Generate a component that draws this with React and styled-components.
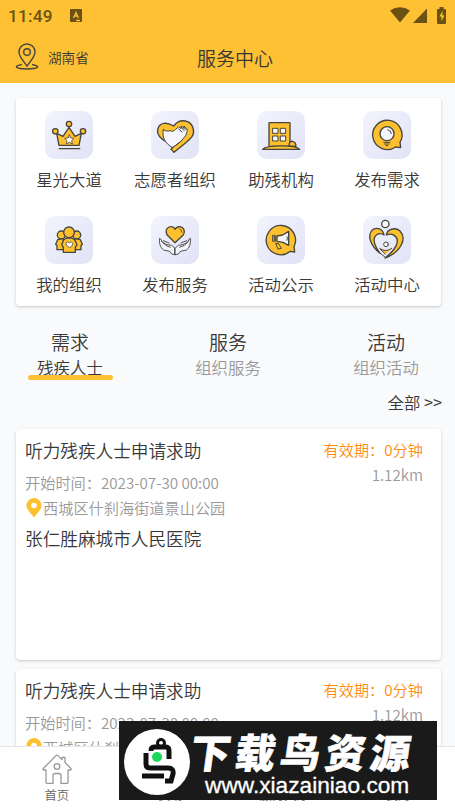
import React from 'react';
import styled, { createGlobalStyle } from 'styled-components';

const INK = '#47453f';
const GOLD = '#fdc02f';

const GlobalStyle = createGlobalStyle`
  * {
    box-sizing: border-box;
  }

  body {
    margin: 0;
    background: #f9fafc;
    font-family: 'Noto Sans CJK SC', sans-serif;
    font-weight: 350;
    color: #383838;
  }
`;

const Screen = styled.div`
  position: relative;
  width: 455px;
  height: 810px;
  display: flex;
  flex-direction: column;
  overflow: hidden;
  background: #f9fafc;
`;

const Header = styled.header`
  flex: none;
  height: 83px;
  background: #fdc133;
`;

const StatusBar = styled.div`
  height: 32px;
  padding: 0 8px;
  display: flex;
  align-items: center;
  color: #6b5114;
`;

const Time = styled.span`
  font-family: Roboto, sans-serif;
  font-size: 17.2px;
  font-weight: 500;
  letter-spacing: 0.2px;
  line-height: 32px;
`;

const StatusIcon = styled.svg`
  flex: none;
  margin-left: ${({ $gap }) => $gap};
  margin-top: -2px;
`;

const TitleBar = styled.div`
  height: 51px;
  display: grid;
  grid-template-columns: 1fr auto 1fr;
  align-items: center;
  padding: 0 14px 0 15px;
`;

const Region = styled.div`
  display: flex;
  align-items: center;
  gap: 9px;
  margin-top: -2px;
  font-size: 13.6px;
  line-height: 20px;
`;

const Title = styled.h1`
  margin: 0 0 0 14px;
  font-size: 19px;
  font-weight: 350;
  line-height: 28px;
`;

const Panel = styled.section`
  flex: none;
  margin: 0 14px 0 16px;
  background: #fff;
  border-radius: 4px;
  box-shadow: 0 1px 3px rgba(0, 0, 0, 0.2);
`;

const Menu = styled(Panel)`
  height: 208px;
  margin-top: 15px;
  padding-top: 13px;
  padding-right: 1px;
  display: grid;
  grid-template-columns: repeat(4, 1fr);
  grid-auto-rows: 105px;
`;

const MenuItem = styled.div`
  display: flex;
  flex-direction: column;
  align-items: center;
  gap: 8px;
  font-size: 16.4px;
  line-height: 24px;
  white-space: nowrap;
`;

const Tile = styled.div`
  width: 48px;
  height: 48px;
  border-radius: 10px;
  background: linear-gradient(135deg, #f2f4fe, #e1e2f5);

  svg {
    display: block;
    fill: ${GOLD};
    stroke: ${INK};
    stroke-width: 4;
    stroke-linejoin: round;
    stroke-linecap: round;
  }
`;

const Tabs = styled.div`
  flex: none;
  display: flex;
  justify-content: space-between;
  margin-top: 22px;
  padding: 0 27px 0 28px;
`;

const Tab = styled.div`
  width: 84px;
  display: flex;
  flex-direction: column;
  align-items: center;
  font-size: 19px;
  line-height: 28px;
`;

const TabNote = styled.span`
  margin-top: -1px;
  font-size: 16.4px;
  line-height: 24px;
  color: ${({ $active }) => ($active ? '#383838' : '#999')};
`;

const Underline = styled.div`
  width: 85px;
  height: 5px;
  margin-top: -4px;
  border-radius: 3px;
  background: #fdc133;
`;

const More = styled.div`
  flex: none;
  margin-top: 10px;
  padding-right: 13px;
  font-size: 16.4px;
  line-height: 24px;
  text-align: right;
`;

const Card = styled(Panel)`
  height: 231px;
  margin-top: ${({ $top }) => $top};
  padding: 8px 18px 0 9px;
  display: flex;
  justify-content: space-between;
`;

const Info = styled.div`
  display: flex;
  flex-direction: column;
`;

const CardTitle = styled.div`
  font-size: 17.65px;
  line-height: 28px;
`;

const Detail = styled.div`
  display: flex;
  align-items: center;
  margin-top: ${({ $top }) => $top || '0'};
  font-size: 15.2px;
  line-height: 25px;
  color: #999;
`;

const Content = styled.div`
  margin-top: 5px;
  font-size: 17.65px;
  line-height: 28px;
`;

const Side = styled.div`
  text-align: right;
  font-size: 15.2px;
  line-height: 25px;
  color: #999;
`;

const Expiry = styled.div`
  color: #ff8c0a;
`;

const NavBar = styled.nav`
  position: absolute;
  left: 0;
  right: 0;
  bottom: 0;
  height: 64px;
  display: grid;
  grid-template-columns: repeat(4, 1fr);
  background: #fff;
  border-top: 1px solid #e5e5e5;
`;

const NavItem = styled.div`
  display: flex;
  flex-direction: column;
  align-items: center;
  padding-top: 7px;
  font-size: 12.4px;
  line-height: 18px;
  color: #666;

  svg {
    margin-bottom: 2px;
  }
`;

const Banner = styled.div`
  position: absolute;
  left: 119px;
  top: 721px;
  width: 318px;
  height: 79px;
  padding-left: 5px;
  display: flex;
  align-items: center;
  background: #1a1a1a;
  color: #fff;
`;

const BannerLogo = styled.svg`
  flex: none;
  margin-top: 3px;
`;

const BannerText = styled.div`
  margin: 5px 0 0 1px;
`;

const BannerName = styled.div`
  width: 228px;
  font-size: 40px;
  font-weight: 900;
  line-height: 44px;
  letter-spacing: 5px;
  white-space: nowrap;
  transform: skewX(-8deg);
  -webkit-text-stroke: 0.6px #fff;
`;

const BannerUrl = styled.div`
  margin-left: 14px;
  font-family: 'Liberation Sans', sans-serif;
  font-weight: 400;
  font-size: 22.7px;
  line-height: 25px;
  -webkit-text-stroke: 0.3px #fff;
`;

const Crown = () => (
  <>
    <path d="M35 67l19 9 18-27 18 27 19-9-7 36H42z" />
    <circle cx="72" cy="39" r="8" />
    <circle cx="31" cy="61" r="8" />
    <circle cx="114" cy="61" r="8" />
    <path d="M73 72l4 9 10 1-7 7 2 10-9-5-9 5 2-10-7-7 10-1z" fill="#fff" strokeWidth="2.5" />
    <path d="M43 113h61" />
  </>
);

const HandHeart = () => (
  <>
    <path d="M69 124l-8-9 4-9L31 82C12 65 19 40 39 37c12-2 20 3 29 8 11-15 26-19 42-13 18 9 22 31 13 45-7 10-18 17-26 24z" />
    <path
      d="M37 56c7 5 13 5 20 3 7 4 12 1 17-4l9-8 7 6 1-8 8 7 0-7 10 11-1 6-4 12-16 19-22 16-5-1C42 95 32 78 37 56z"
      fill="#f5f5fe"
      strokeWidth="3"
    />
    <path d="M83 54l10 9M90 49l10 10M97 48l8 8M59 115l30-24" fill="none" strokeWidth="3" />
  </>
);

const Building = () => (
  <>
    <rect x="36" y="35" width="63" height="71" rx="2" />
    <path d="M96 105c-1-19 20-19 21 1z" />
    <path d="M17 115c12-14 98-14 111 0z" />
    <g fill="#f5f5fe" strokeWidth="3">
      <rect x="48" y="52" width="15" height="15" />
      <rect x="71" y="52" width="15" height="15" />
      <rect x="48" y="75" width="15" height="15" />
      <rect x="71" y="75" width="15" height="15" />
    </g>
  </>
);

const Bulb = () => (
  <>
    <path d="M98 108a44 44 0 1 1 13-14l2 16z" />
    <circle cx="72" cy="68" r="21" fill="#f5f5fe" />
    <path d="M74 56q10 2 11 12" fill="none" strokeWidth="3" />
    <path d="M62 94h19M65 99h13M69 104h5" strokeWidth="3" />
  </>
);

const People = () => (
  <>
    <circle cx="49" cy="57" r="12" />
    <circle cx="95" cy="57" r="12" />
    <path d="M56 101H36V89l-4-4 6-14 17-3zM88 101h20V89l4-4-6-14-17-3z" />
    <path d="M55 109V94l-5-8 6-15 10-5h13l10 5 7 15-5 8v15z" />
    <circle cx="72" cy="49" r="16" />
    <path d="M73 95l-9-8c-4-10 6-11 9-6 4-5 13-3 9 6z" fill="#fff" strokeWidth="2.5" />
  </>
);

const HeartHands = () => (
  <>
    <path d="M72 80L49 58c-9-16 1-26 11-26 6 0 10 3 12 8 5-9 16-10 22-5 7 5 8 15 2 23z" />
    <path d="M86 39q7 2 7 10" fill="none" strokeWidth="2.5" />
    <g fill="#f5f5fe" strokeWidth="2.8">
      <path d="M72 116l-10-2-6-8-18-4c-10-7-14-19-12-35 5 1 5 8 8 12l14 7 14 2 10 9z" />
      <path d="M72 116l10-2 6-8 18-4c10-7 14-19 12-35-5 1-5 8-8 12l-14 7-14 2-10 9z" />
      <path d="M33 77q10 15 25 17M37 74l17 7M111 77q-10 15-25 17M107 74l-17 7M72 97v18" fill="none" />
    </g>
  </>
);

const Megaphone = () => (
  <>
    <path d="M100 106a44 44 0 1 1 11-14l2 16z" />
    <path d="M60 60l17-3 18-11v42l-17-9-18-3z" fill="#f5f5fe" />
    <path d="M47 59v17h5V59zM56 59v17" fill="none" strokeWidth="3" />
    <path d="M90 62q4 5 0 11" fill="none" strokeWidth="3" />
    <path d="M57 82l8 1 8 14-9 2z" strokeWidth="3" />
  </>
);

const Family = () => (
  <>
    <circle cx="67" cy="24" r="11" fill="#fff" />
    <path d="M63 57C60 38 40 31 27 43c-14 16-6 44 24 69-18-26-22-44-13-53 8-9 19-7 25-2z" />
    <path d="M70 57c2-17 26-25 41-12 22 23 2 64-45 81 37-29 42-51 33-63-7-9-19-10-29-6z" />
    <path d="M50 97q18 12 36 0L68 115z" stroke="none" />
    <path d="M51 98q18 12 35-1M52 112l14 11M52 100l15 14" fill="none" strokeWidth="3" />
    <circle cx="69" cy="85" r="7" fill="#fff" strokeWidth="3" />
  </>
);

const menu = [
  { label: '星光大道', icon: Crown },
  { label: '志愿者组织', icon: HandHeart },
  { label: '助残机构', icon: Building },
  { label: '发布需求', icon: Bulb },
  { label: '我的组织', icon: People },
  { label: '发布服务', icon: HeartHands },
  { label: '活动公示', icon: Megaphone },
  { label: '活动中心', icon: Family },
];

const tabs = [
  { name: '需求', note: '残疾人士' },
  { name: '服务', note: '组织服务' },
  { name: '活动', note: '组织活动' },
];

const nav = ['首页', '资助', '服务大厅', '我的'];

const HomeIcon = () => (
  <svg width="30" height="30" viewBox="0 0 30 30" fill="none" stroke="#999" strokeWidth="1.3" strokeLinejoin="round">
    <path d="M4 16H1.5Q.5 15.5 1.3 14.5L14 1.6q1-.8 2 0l4 4V3.5h3v5l6 6q.6 1-.4 1.5H26v12q0 1.5-1.5 1.5H19v-8q0-2-2-2h-4q-2 0-2 2v8H5.5Q4 29.5 4 28z" />
    <circle cx="15" cy="12.5" r="2.8" />
  </svg>
);

const Request = ({ top }) => (
  <Card $top={top}>
    <Info>
      <CardTitle>听力残疾人士申请求助</CardTitle>
      <Detail $top="5px">开始时间：2023-07-30 00:00</Detail>
      <Detail>
        <svg width="18" height="20" viewBox="0 0 18 20">
          <path d="M9 19.5C6 15.5 1.500 11.5 1.500 7.500a7.500 7.500 0 0 1 15 0c0 4-4.500 8-7.500 12z" fill={GOLD} />
          <circle cx="9" cy="7.5" r="2.8" fill="#fff" />
        </svg>
        西城区什刹海街道景山公园
      </Detail>
      <Content>张仁胜麻城市人民医院</Content>
    </Info>
    <Side>
      <Expiry>有效期：0分钟</Expiry>
      <div>1.12km</div>
    </Side>
  </Card>
);

export default function App() {
  return (
    <Screen>
      <GlobalStyle />
      <Header>
        <StatusBar>
          <Time>11:49</Time>
          <StatusIcon $gap="17px" width="12" height="13" viewBox="0 0 12 13">
            <rect width="12" height="13" rx="1" fill="currentColor" />
            <path d="M3.500 9L6 3.500 8.500 9M4.500 7h3M6 11.500h4" fill="none" stroke="#fdc133" strokeWidth="1.3" />
          </StatusIcon>
          <StatusIcon $gap="auto" width="20" height="16" viewBox="0 0 20 16" fill="currentColor">
            <path d="M0 3.5Q10-3 20 3.5L10 15.5z" />
          </StatusIcon>
          <StatusIcon $gap="3px" width="14" height="15" viewBox="0 0 14 15" fill="currentColor">
            <path d="M14 .5V15H0z" />
          </StatusIcon>
          <StatusIcon $gap="10px" width="10" height="17" viewBox="0 0 10 17">
            <path d="M2.500 0h4v2H8q1 0 1 1v13q0 1-1 1H1q-1 0-1-1V3q0-1 1-1h1.500z" fill="currentColor" />
            <path d="M5.500 4L2.500 9.500h2V14l3-5.500h-2z" fill="#fdc133" />
          </StatusIcon>
        </StatusBar>
        <TitleBar>
          <Region>
            <svg width="24" height="27" viewBox="0 0 24 27" fill="none" stroke={INK} strokeWidth="1.4">
              <path d="M12 23C9 18.500 4 14 4 9a8 8 0 0 1 16 0c0 5-5 9.500-8 14z" />
              <circle cx="12" cy="9" r="3.3" />
              <path d="M7 21.500c-9 1.500-7 4.500 5 4.500s14-3 5-4.500" />
            </svg>
            湖南省
          </Region>
          <Title>服务中心</Title>
        </TitleBar>
      </Header>
      <Menu>
        {menu.map(({ label, icon: Icon }) => (
          <MenuItem key={label}>
            <Tile>
              <svg width="48" height="48" viewBox="0 0 144 144">
                <Icon />
              </svg>
            </Tile>
            {label}
          </MenuItem>
        ))}
      </Menu>
      <Tabs>
        {tabs.map(({ name, note }, index) => (
          <Tab key={name}>
            {name}
            <TabNote $active={index === 0}>{note}</TabNote>
            {index === 0 && <Underline />}
          </Tab>
        ))}
      </Tabs>
      <More>全部 &gt;&gt;</More>
      <Request top="15px" />
      <Request top="9px" />
      <NavBar>
        {nav.map((label) => (
          <NavItem key={label}>
            <HomeIcon />
            {label}
          </NavItem>
        ))}
      </NavBar>
      <Banner>
        <BannerLogo width="66" height="66" viewBox="0 0 66 66" fill="none" stroke="#111" strokeWidth="5">
          <circle cx="33" cy="33" r="33" fill="#fff" stroke="none" />
          <circle cx="37" cy="14" r="3.5" strokeWidth="3" />
          <path d="M27 22q0-4 3-4h12q3 0 3 4v8M22 24v11q0 4 4 4h18q6 0 5 6l-2 7h-6M18 47h22" />
          <circle cx="33" cy="28" r="5" fill="#1bd85c" stroke="none" />
        </BannerLogo>
        <BannerText>
          <BannerName>下载鸟资源</BannerName>
          <BannerUrl>www.xiazainiao.com</BannerUrl>
        </BannerText>
      </Banner>
    </Screen>
  );
}
